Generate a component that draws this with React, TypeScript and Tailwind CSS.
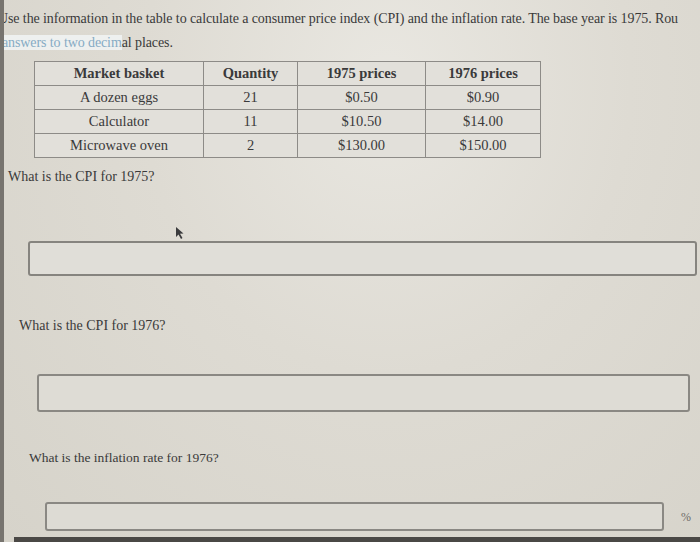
import React from "react";

type Row = {
  item: string;
  qty: string;
  p1975: string;
  p1976: string;
};

const rows: Row[] = [
  { item: "A dozen eggs", qty: "21", p1975: "$0.50", p1976: "$0.90" },
  { item: "Calculator", qty: "11", p1975: "$10.50", p1976: "$14.00" },
  { item: "Microwave oven", qty: "2", p1975: "$130.00", p1976: "$150.00" },
];

const serif = { fontFamily: '"Liberation Serif", "Times New Roman", serif' };

export default function App() {
  return (
    <div
      className="relative h-[542px] w-[700px] overflow-hidden border-l-[4px] border-[#77746f] bg-[#dcd9d1] bg-[radial-gradient(ellipse_at_55%_15%,#e9e7e1_0%,#dedbd3_45%,#d6d3ca_100%)] text-[#3a3a3a]"
      style={serif}
    >
      {/* Question prompt */}
      <div className="whitespace-nowrap pt-[7px] text-[14px] leading-[24px] tracking-[-0.1px]">
        <p className="-ml-[6px]">
          Use the information in the table to calculate a consumer price index (CPI) and the inflation rate. The base
          year is 1975. Rou
        </p>
        <p className="-ml-[2px]">
          <span className="bg-[#eef0ef] text-[#86abc4]">answers to two decim</span>
          al places.
        </p>
      </div>

      {/* Data table */}
      <div className="ml-[30px] mt-[6px] w-[507px]">
        <table className="w-full border-collapse bg-[#e2e0da] text-[14.5px] text-[#3a3a3a]">
          <thead>
            <tr className="h-[24px]">
              <th className="w-[169px] border border-[#8d8b87] font-bold">Market basket</th>
              <th className="w-[94px] border border-[#8d8b87] font-bold">Quantity</th>
              <th className="w-[128px] border border-[#8d8b87] font-bold">1975 prices</th>
              <th className="border border-[#8d8b87] font-bold">1976 prices</th>
            </tr>
          </thead>
          <tbody>
            {rows.map((r) => (
              <tr key={r.item} className="h-[24px] text-center">
                <td className="border border-[#8d8b87]">{r.item}</td>
                <td className="border border-[#8d8b87]">{r.qty}</td>
                <td className="border border-[#8d8b87]">{r.p1975}</td>
                <td className="border border-[#8d8b87]">{r.p1976}</td>
              </tr>
            ))}
          </tbody>
        </table>
      </div>

      {/* Answer: CPI 1975 */}
      <p className="ml-[4px] mt-[10px] text-[14px] leading-[18px]">What is the CPI for 1975?</p>
      <div className="ml-[24px] mt-[55px] h-[35px] w-[669px] rounded-[3px] border-2 border-[#86847f] bg-[#e0ded8]" />

      {/* Answer: CPI 1976 */}
      <p className="ml-[15px] mt-[41px] text-[14px] leading-[18px]">What is the CPI for 1976?</p>
      <div className="ml-[33px] mt-[39px] h-[38px] w-[653px] rounded-[3px] border-2 border-[#8a8883] bg-[#dedcd5]" />

      {/* Answer: inflation rate */}
      <p className="ml-[25px] mt-[37px] text-[13.5px] leading-[18px]">What is the inflation rate for 1976?</p>
      <div className="mt-[35px] flex items-center">
        <div className="ml-[41px] h-[29px] w-[619px] rounded-[3px] border-2 border-[#8a8883] bg-[#dddbd4]" />
        <span className="ml-[17px] text-[12px] text-[#6d6b67]">%</span>
      </div>

      {/* Bottom bezel edge */}
      <div className="absolute bottom-0 left-[10px] right-0 h-[5px] bg-[#4a4845]" />

      {/* Mouse pointer */}
      <svg className="absolute left-[170px] top-[226px]" width="12" height="14" viewBox="0 0 12 14">
        <path d="M2 1 L2 11 L4.5 8.5 L7 13 L8.5 12 L6 7.8 L9.5 7.5 Z" fill="#3b3b3d" />
      </svg>
    </div>
  );
}
